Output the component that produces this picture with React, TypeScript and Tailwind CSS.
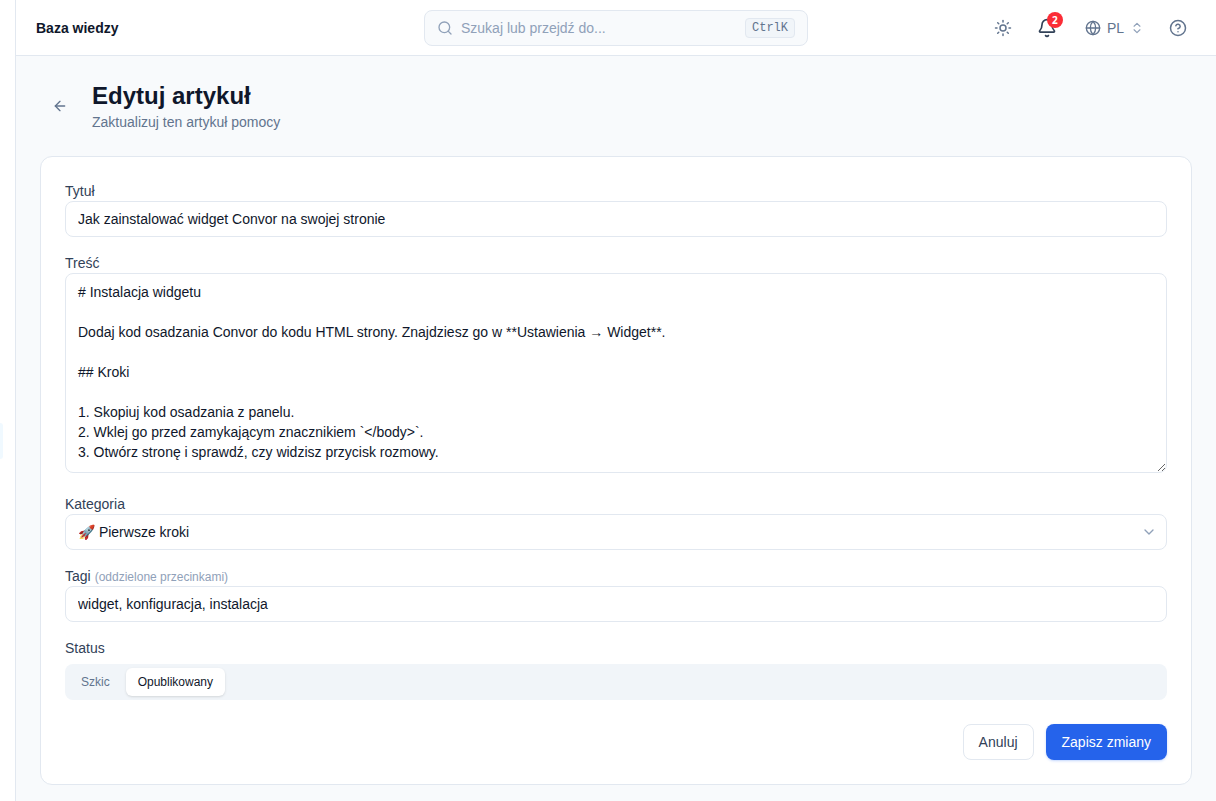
import { useState } from "react";
import type { ReactNode } from "react";
import { ArrowLeft, Bell, ChevronDown, ChevronsUpDown, CircleHelp, Globe, Search, Sun } from "lucide-react";

const CONTENT = `# Instalacja widgetu

Dodaj kod osadzania Convor do kodu HTML strony. Znajdziesz go w **Ustawienia → Widget**.

## Kroki

1. Skopiuj kod osadzania z panelu.
2. Wklej go przed zamykającym znacznikiem \`</body>\`.
3. Otwórz stronę i sprawdź, czy widzisz przycisk rozmowy.`;

const fieldClass =
  "block w-full rounded-lg border border-slate-200 bg-white px-3 text-sm text-slate-900 outline-none focus:border-[#2563eb]";

function IconButton({ label, children }: { label: string; children: ReactNode }) {
  return (
    <button
      type="button"
      aria-label={label}
      className="relative flex size-9 items-center justify-center rounded-lg text-slate-500 hover:bg-slate-100"
    >
      {children}
    </button>
  );
}

function Topbar() {
  return (
    <header className="grid h-14 grid-cols-[1fr_minmax(0,384px)_1fr] items-center gap-4 border-b border-slate-200 bg-white px-5">
      <span className="text-sm font-semibold text-slate-900">Baza wiedzy</span>

      <label className="flex h-9 items-center gap-2 rounded-lg border border-slate-200 bg-slate-50 px-3">
        <Search size={16} className="shrink-0 text-slate-400" />
        <input
          type="search"
          aria-label="Szukaj"
          placeholder="Szukaj lub przejdź do..."
          className="min-w-0 flex-1 bg-transparent text-sm outline-none placeholder:text-slate-400"
        />
        <kbd className="rounded border border-slate-200 bg-slate-100 px-1.5 font-['Liberation_Mono',monospace] text-xs leading-[18px] text-slate-500">
          CtrlK
        </kbd>
      </label>

      <div className="flex items-center justify-end gap-2">
        <IconButton label="Motyw">
          <Sun size={18} />
        </IconButton>
        <IconButton label="Powiadomienia">
          <Bell size={20} className="text-slate-700" />
          <span className="absolute top-0.5 right-0.5 flex size-4 items-center justify-center rounded-full bg-red-500 font-['Noto_Sans',sans-serif] text-[10px] leading-none font-bold text-white">
            2
          </span>
        </IconButton>
        <button
          type="button"
          className="flex h-9 items-center gap-1.5 rounded-lg pr-2 pl-3 text-sm text-slate-500 hover:bg-slate-100"
        >
          <Globe size={16} />
          PL
          <ChevronsUpDown size={14} className="text-slate-400" />
        </button>
        <IconButton label="Pomoc">
          <CircleHelp size={18} />
        </IconButton>
      </div>
    </header>
  );
}

function Field({ id, label, hint, children }: { id: string; label: string; hint?: string; children: ReactNode }) {
  return (
    <div>
      <label htmlFor={id} className="block text-sm text-slate-700">
        {label}
        {hint && <span className="ml-1 text-xs text-slate-400">{hint}</span>}
      </label>
      {children}
    </div>
  );
}

function StatusSwitch() {
  const [status, setStatus] = useState("published");
  const options = [
    { id: "draft", label: "Szkic" },
    { id: "published", label: "Opublikowany" },
  ];

  return (
    <div role="group" aria-labelledby="status-label">
      <p id="status-label" className="mb-1.5 text-sm text-slate-700">
        Status
      </p>
      <div className="flex gap-1 rounded-lg bg-slate-100 p-1">
        {options.map((o) => (
          <button
            key={o.id}
            type="button"
            aria-pressed={status === o.id}
            onClick={() => setStatus(o.id)}
            className={
              status === o.id
                ? "h-7 rounded-md bg-white px-3 text-xs text-slate-900 shadow-sm"
                : "h-7 rounded-md px-3 text-xs text-slate-500"
            }
          >
            {o.label}
          </button>
        ))}
      </div>
    </div>
  );
}

export default function App() {
  return (
    <div className="flex min-h-screen bg-slate-50 font-['Liberation_Sans',Arial,sans-serif] text-slate-900">
      <aside className="flex w-4 shrink-0 items-center border-r border-slate-200 bg-white pt-20">
        <div className="h-9 w-[3px] rounded-r-lg bg-sky-50" />
      </aside>

      <div className="min-w-0 flex-1">
        <Topbar />

        <main className="px-6 pt-6 pb-4">
          <div className="mb-6 flex items-center gap-3">
            <button
              type="button"
              aria-label="Wstecz"
              className="flex size-10 items-center justify-center rounded-lg text-slate-500 hover:bg-slate-100"
            >
              <ArrowLeft size={16} />
            </button>
            <div>
              <h1 className="text-2xl font-bold">Edytuj artykuł</h1>
              <p className="text-sm text-slate-500">Zaktualizuj ten artykuł pomocy</p>
            </div>
          </div>

          <form
            className="flex flex-col gap-4 rounded-xl border border-slate-200 bg-white p-6"
            onSubmit={(e) => e.preventDefault()}
          >
            <Field id="title" label="Tytuł">
              <input
                id="title"
                defaultValue="Jak zainstalować widget Convor na swojej stronie"
                className={`${fieldClass} h-9`}
              />
            </Field>

            <Field id="content" label="Treść">
              <textarea
                id="content"
                defaultValue={CONTENT}
                className={`${fieldClass} mb-[5px] h-50 resize-y py-2`}
              />
            </Field>

            <Field id="category" label="Kategoria">
              <div className="relative">
                <select id="category" className={`${fieldClass} h-9 appearance-none pr-9`}>
                  <option>🚀 Pierwsze kroki</option>
                </select>
                <ChevronDown
                  size={16}
                  className="pointer-events-none absolute inset-y-0 right-2.5 my-auto text-slate-400"
                />
              </div>
            </Field>

            <Field id="tags" label="Tagi" hint="(oddzielone przecinkami)">
              <input id="tags" defaultValue="widget, konfiguracja, instalacja" className={`${fieldClass} h-9`} />
            </Field>

            <StatusSwitch />

            <div className="flex justify-end gap-3 pt-2">
              <button
                type="button"
                className="h-9 rounded-lg border border-slate-200 bg-white px-[15px] text-sm text-slate-700 hover:bg-slate-50"
              >
                Anuluj
              </button>
              <button
                type="submit"
                className="h-9 rounded-lg bg-[#2563eb] px-4 text-sm text-white shadow-sm shadow-blue-600/20 hover:bg-[#1d4ed8]"
              >
                Zapisz zmiany
              </button>
            </div>
          </form>
        </main>
      </div>
    </div>
  );
}
